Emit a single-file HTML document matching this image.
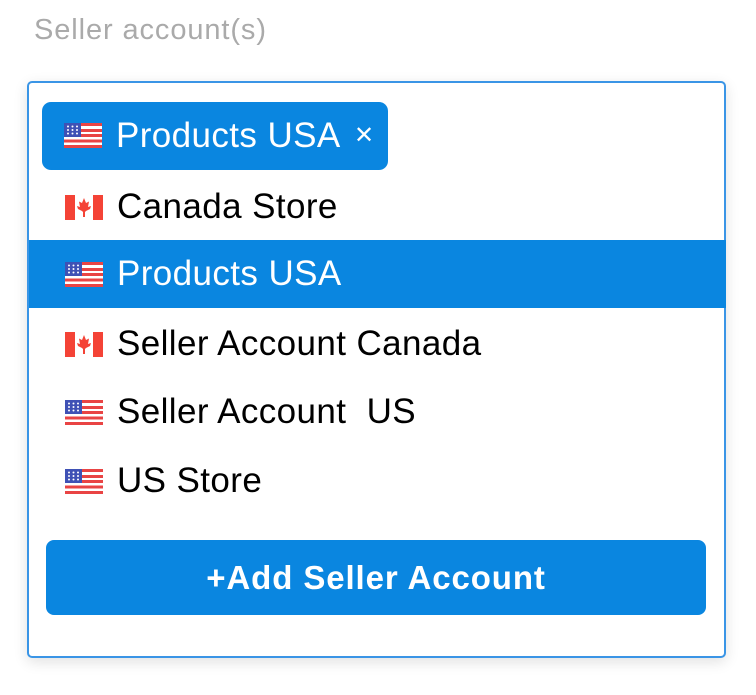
<!DOCTYPE html>
<html><head><style>
body{margin:0;width:756px;height:695px;background:#fff;font-family:"Liberation Sans",Arial,sans-serif;position:relative;overflow:hidden}
.lbl{position:absolute;left:34px;top:14px;font-size:29px;color:#aaa;letter-spacing:0.9px}
.box{position:absolute;left:27px;top:81px;width:695px;height:573px;border:2px solid #3a95e6;border-radius:5px;box-shadow:0 4px 14px rgba(0,0,0,0.12);background:#fff}
.row{position:absolute;left:0;width:697px;height:68px;font-size:35px;letter-spacing:0.4px;color:#000}
.row svg{position:absolute;left:36px;top:22px}
.row span{position:absolute;left:88px;top:14px;line-height:40px}
.sel{background:#0a86e0;color:#fff}
.chip{position:absolute;left:13px;top:19px;width:346px;height:68px;background:#0a86e0;border-radius:9px;color:#fff;font-size:35px;letter-spacing:0.4px}
.chip svg{position:absolute;left:22px;top:21px}
.chip span{position:absolute;left:74px;top:14px;line-height:40px}
.chip .x{left:312px;font-size:24px;top:14px;font-weight:normal}
.btn{position:absolute;left:17px;top:457px;width:660px;height:75px;background:#0a86e0;border-radius:8px;color:#fff;font-weight:bold;font-size:33px;text-align:center;line-height:75px;letter-spacing:0.9px}
</style></head><body>
<svg width="0" height="0" style="position:absolute"><defs>
<g id="us"><rect width="38" height="25" fill="#fff"/><rect y="0" width="38" height="3" fill="#e94444"/><rect y="6" width="38" height="3" fill="#e94444"/><rect y="11" width="38" height="3" fill="#e94444"/><rect y="16.5" width="38" height="3" fill="#e94444"/><rect y="22" width="38" height="3" fill="#e94444"/><rect width="17" height="14" fill="#3f51b5"/><g fill="#fff"><circle cx="4" cy="3.5" r="1"/><circle cx="8.5" cy="3.5" r="1"/><circle cx="13" cy="3.5" r="1"/><circle cx="4" cy="7" r="1"/><circle cx="8.5" cy="7" r="1"/><circle cx="13" cy="7" r="1"/><circle cx="4" cy="10.5" r="1"/><circle cx="8.5" cy="10.5" r="1"/><circle cx="13" cy="10.5" r="1"/></g></g>
<g id="ca"><rect width="38" height="25" fill="#fff"/><rect width="10" height="25" fill="#f44336"/><rect x="28" width="10" height="25" fill="#f44336"/><path d="M19 3 L21 8 L24 6.5 L23 12 L26 11 L25 14 L21 16 L20 17 L20 22 L18 22 L18 17 L17 16 L13 14 L12 11 L15 12 L14 6.5 L17 8 Z" fill="#f44336"/></g>
</defs></svg>
<div class="lbl">Seller account(s)</div>
<div class="box">
<div class="chip"><svg width="38" height="25"><use href="#us"/></svg><span>Products USA</span><span class="x">✕</span></div>
<div class="row" style="top:90px"><svg width="38" height="25"><use href="#ca"/></svg><span>Canada Store</span></div>
<div class="row sel" style="top:157px"><svg width="38" height="25"><use href="#us"/></svg><span>Products USA</span></div>
<div class="row" style="top:227px"><svg width="38" height="25"><use href="#ca"/></svg><span>Seller Account Canada</span></div>
<div class="row" style="top:295px"><svg width="38" height="25"><use href="#us"/></svg><span>Seller Account&nbsp; US</span></div>
<div class="row" style="top:364px"><svg width="38" height="25"><use href="#us"/></svg><span>US Store</span></div>
<div class="btn">+Add Seller Account</div>
</div>
</body></html>
